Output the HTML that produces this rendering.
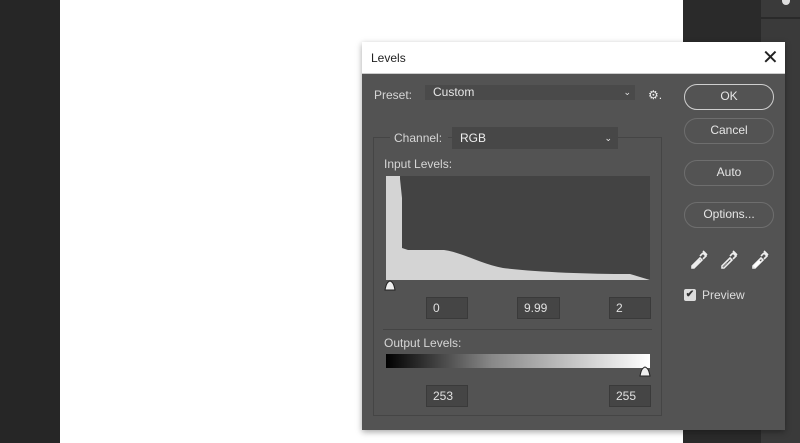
<!DOCTYPE html>
<html><head><style>
*{margin:0;padding:0;box-sizing:border-box}
body{width:800px;height:443px;overflow:hidden;position:relative;background:#fff;font-family:"Liberation Sans",sans-serif;font-size:12px;color:#d6d6d6}
.a{position:absolute}
.box{position:absolute;background:#454545;border:1px solid #3a3a3a;color:#e0e0e0;font-size:12px;padding:3px 0 0 6px;height:22px}
.btn{position:absolute;left:684px;width:90px;height:26px;border:1.5px solid #6e6e6e;border-radius:13px;text-align:center;line-height:23px;color:#e6e6e6;font-size:12px}
</style></head><body>
<div class="a" style="left:0;top:0;width:60px;height:443px;background:#262626"></div>
<div class="a" style="left:683px;top:0;width:78px;height:443px;background:#2a2a2a"></div>
<div class="a" style="left:761px;top:0;width:39px;height:443px;background:#3a3a3a"></div>
<div class="a" style="left:761px;top:17px;width:39px;height:2px;background:#2a2a2a"></div>
<div class="a" style="left:782px;top:0;width:8px;height:5px;background:#ddd;border-radius:0 0 4px 4px"></div>
<!-- dialog -->
<div class="a" style="left:362px;top:42px;width:423px;height:388px;background:#535353;box-shadow:0 2px 6px rgba(0,0,0,.35)"></div>
<div class="a" style="left:362px;top:42px;width:423px;height:32px;background:#fff;border-bottom:1px solid #ccc"></div>
<div class="a" style="left:371px;top:51px;color:#222;font-size:12px">Levels</div>
<div class="a" style="left:762px;top:45px;color:#222;font-size:20px">✕</div>
<div class="a" style="left:374px;top:88px">Preset:</div>
<div class="a" style="left:425px;top:85px;width:210px;height:15px;background:#4a4a4a;color:#e6e6e6;padding-left:8px;line-height:14px">Custom<span style="position:absolute;right:4px;font-size:9px">⌄</span></div>
<div class="a" style="left:648px;top:88px;font-size:12px;color:#eee">⚙.</div>
<div class="btn" style="top:84px;border-color:#cfcfcf">OK</div>
<div class="btn" style="top:118px">Cancel</div>
<div class="btn" style="top:160px">Auto</div>
<div class="btn" style="top:202px">Options...</div>
<!-- fieldset -->
<div class="a" style="left:373px;top:137px;width:289px;height:279px;border:1px solid #454545"></div>
<div class="a" style="left:390px;top:130px;width:58px;height:16px;background:#535353;padding-left:4px;line-height:16px">Channel:</div>
<div class="a" style="left:452px;top:127px;width:166px;height:22px;background:#474747;color:#eee;padding-left:8px;line-height:22px">RGB<span style="position:absolute;right:6px;font-size:9px">⌄</span></div>
<div class="a" style="left:384px;top:157px">Input Levels:</div>
<svg class="a" style="left:386px;top:176px" width="264" height="104">
<rect width="264" height="104" fill="#434343"/>
<path d="M0 0H14V3L16 22V72L22 74H58C75 76 95 88 117 92C150 96 200 98 244 98L264 104H0Z" fill="#d4d4d4"/>
</svg>
<svg class="a" style="left:383px;top:280px" width="14" height="12"><path d="M7 1C4 2 3 5 2 10H12C11 5 10 2 7 1Z" fill="#eee" stroke="#222"/></svg>
<div class="box" style="left:426px;top:297px;width:42px">0</div>
<div class="box" style="left:517px;top:297px;width:43px">9.99</div>
<div class="box" style="left:609px;top:297px;width:42px">2</div>
<div class="a" style="left:383px;top:329px;width:269px;height:1px;background:#444"></div>
<div class="a" style="left:384px;top:336px">Output Levels:</div>
<div class="a" style="left:386px;top:354px;width:264px;height:14px;background:linear-gradient(90deg,#000,#888 40%,#fff)"></div>
<svg class="a" style="left:638px;top:366px" width="14" height="12"><path d="M7 1C4 2 3 5 2 10H12C11 5 10 2 7 1Z" fill="#eee" stroke="#222"/></svg>
<div class="box" style="left:426px;top:385px;width:42px">253</div>
<div class="box" style="left:609px;top:385px;width:42px">255</div>
<!-- eyedroppers -->
<svg class="a" style="left:688px;top:248px" width="88" height="24">
<g fill="none" stroke="#eee" stroke-width="1.6">
<path d="M4 20l8-8M6 20l-2 0 0-2 8-8 2 2zM12 8l3-3 3 3-3 3M15 3l4 4" /></g>
<g transform="translate(30,0)" fill="none" stroke="#eee" stroke-width="1.6"><path d="M6 20l-2 0 0-2 8-8 2 2zM12 8l3-3 3 3-3 3M15 3l4 4"/><path d="M5 19l4-4" stroke="#888"/></g>
<g transform="translate(61,0)" fill="none" stroke="#eee" stroke-width="1.6"><path d="M6 20l-2 0 0-2 8-8 2 2zM12 8l3-3 3 3-3 3M15 3l4 4"/><path d="M5 19l6-6" stroke="#fff" stroke-width="3"/></g>
</svg>
<div class="a" style="left:684px;top:289px;width:12px;height:12px;background:#ddd;border-radius:2px;color:#333;font-size:10px;line-height:12px;text-align:center;font-weight:bold">✔</div>
<div class="a" style="left:702px;top:288px;color:#ddd">Preview</div>
</body></html>
